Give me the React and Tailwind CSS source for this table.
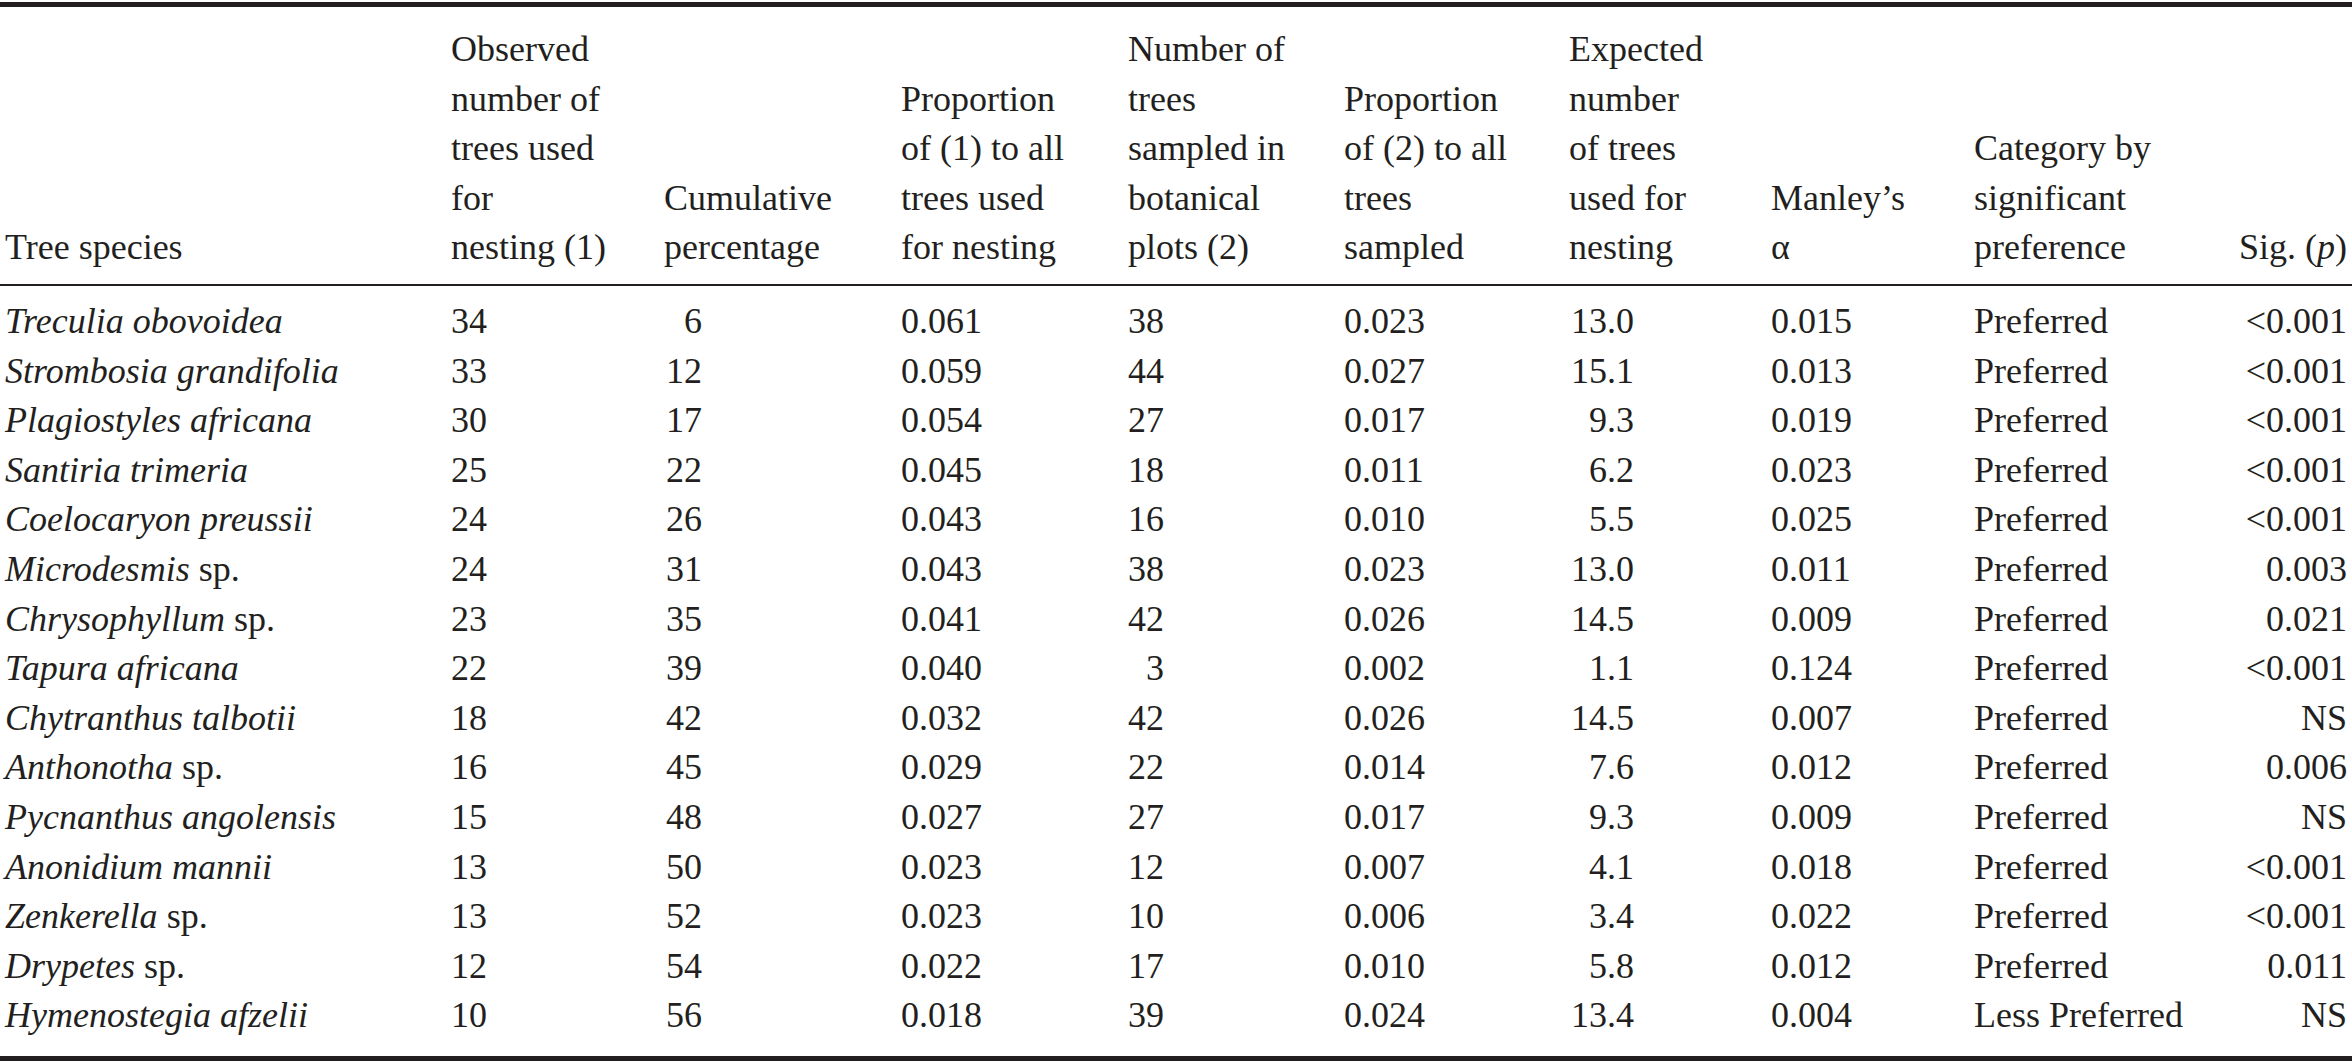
import React from "react";

const rows = [
  [["Treculia obovoidea"], "34", "6", "0.061", "38", "0.023", "13.0", "0.015", "Preferred", "<0.001"],
  [["Strombosia grandifolia"], "33", "12", "0.059", "44", "0.027", "15.1", "0.013", "Preferred", "<0.001"],
  [["Plagiostyles africana"], "30", "17", "0.054", "27", "0.017", "9.3", "0.019", "Preferred", "<0.001"],
  [["Santiria trimeria"], "25", "22", "0.045", "18", "0.011", "6.2", "0.023", "Preferred", "<0.001"],
  [["Coelocaryon preussii"], "24", "26", "0.043", "16", "0.010", "5.5", "0.025", "Preferred", "<0.001"],
  [["Microdesmis", " sp."], "24", "31", "0.043", "38", "0.023", "13.0", "0.011", "Preferred", "0.003"],
  [["Chrysophyllum", " sp."], "23", "35", "0.041", "42", "0.026", "14.5", "0.009", "Preferred", "0.021"],
  [["Tapura africana"], "22", "39", "0.040", "3", "0.002", "1.1", "0.124", "Preferred", "<0.001"],
  [["Chytranthus talbotii"], "18", "42", "0.032", "42", "0.026", "14.5", "0.007", "Preferred", "NS"],
  [["Anthonotha", " sp."], "16", "45", "0.029", "22", "0.014", "7.6", "0.012", "Preferred", "0.006"],
  [["Pycnanthus angolensis"], "15", "48", "0.027", "27", "0.017", "9.3", "0.009", "Preferred", "NS"],
  [["Anonidium mannii"], "13", "50", "0.023", "12", "0.007", "4.1", "0.018", "Preferred", "<0.001"],
  [["Zenkerella", " sp."], "13", "52", "0.023", "10", "0.006", "3.4", "0.022", "Preferred", "<0.001"],
  [["Drypetes", " sp."], "12", "54", "0.022", "17", "0.010", "5.8", "0.012", "Preferred", "0.011"],
  [["Hymenostegia afzelii"], "10", "56", "0.018", "39", "0.024", "13.4", "0.004", "Less Preferred", "NS"],
];

const grid =
  "grid grid-cols-[446px_213px_237px_227px_216px_225px_202px_203px_260px_1fr] pl-[5px] pr-[5px] text-[36px] leading-[49.6px] whitespace-nowrap";

const Head = ({ lines }) => (
  <div>
    {lines.map((l, i) => (
      <React.Fragment key={i}>
        {l}
        {i < lines.length - 1 && <br />}
      </React.Fragment>
    ))}
  </div>
);

export default function App() {
  return (
    <div
      className="w-[2352px] h-[1064px] bg-white text-[#231f20] pt-[2px]"
      style={{ fontFamily: '"Liberation Serif", "Times New Roman", serif' }}
    >
      <div className="h-[5px] bg-[#231f20]" />

      {/* header */}
      <div className={`${grid} items-end pt-[18px] pb-[11px]`}>
        <Head lines={["Tree species"]} />
        <Head lines={["Observed", "number of", "trees used", "for", "nesting (1)"]} />
        <Head lines={["Cumulative", "percentage"]} />
        <Head lines={["Proportion", "of (1) to all", "trees used", "for nesting"]} />
        <Head lines={["Number of", "trees", "sampled in", "botanical", "plots (2)"]} />
        <Head lines={["Proportion", "of (2) to all", "trees", "sampled"]} />
        <Head lines={["Expected", "number", "of trees", "used for", "nesting"]} />
        <Head lines={["Manley\u2019s", "\u03b1"]} />
        <Head lines={["Category by", "significant", "preference"]} />
        <div className="text-right">
          Sig. (<i>p</i>)
        </div>
      </div>

      <div className="h-[2px] bg-[#231f20]" />

      {/* body */}
      <div className="pt-[11px] pb-[15px]">
        {rows.map((r, i) => (
          <div key={i} className={grid}>
            <div>
              <i>{r[0][0]}</i>
              {r[0][1]}
            </div>
            <div>{r[1]}</div>
            <div>
              <span className="inline-block w-[38px] text-right">{r[2]}</span>
            </div>
            <div>{r[3]}</div>
            <div>
              <span className="inline-block w-[36px] text-right">{r[4]}</span>
            </div>
            <div>{r[5]}</div>
            <div>
              <span className="inline-block w-[65px] text-right">{r[6]}</span>
            </div>
            <div>{r[7]}</div>
            <div>{r[8]}</div>
            <div className="text-right">{r[9]}</div>
          </div>
        ))}
      </div>

      <div className="h-[5px] bg-[#231f20]" />
    </div>
  );
}
